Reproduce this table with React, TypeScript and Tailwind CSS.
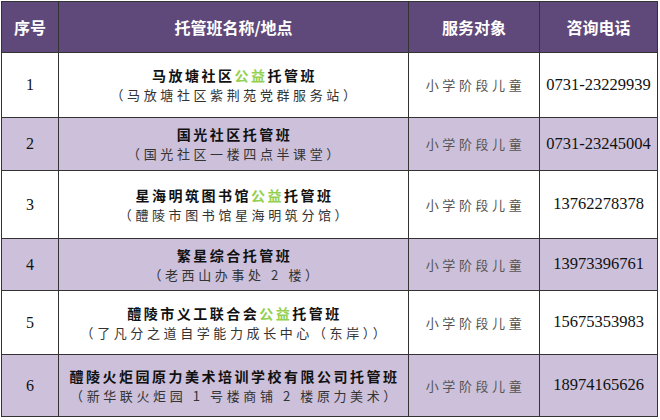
const rows = [
  {
    no: "1",
    pre: "马放塘社区",
    green: "公益",
    post: "托管班",
    sub: "（马放塘社区紫荆苑党群服务站）",
    phone: "0731-23229939",
    h: "h-[65px]",
    alt: false,
  },
  {
    no: "2",
    pre: "国光社区托管班",
    green: "",
    post: "",
    sub: "（国光社区一楼四点半课堂）",
    phone: "0731-23245004",
    h: "h-[53px]",
    alt: true,
  },
  {
    no: "3",
    pre: "星海明筑图书馆",
    green: "公益",
    post: "托管班",
    sub: "（醴陵市图书馆星海明筑分馆）",
    phone: "13762278378",
    h: "h-[68px]",
    alt: false,
  },
  {
    no: "4",
    pre: "繁星综合托管班",
    green: "",
    post: "",
    sub: "（老西山办事处 2 楼）",
    phone: "13973396761",
    h: "h-[52px]",
    alt: true,
  },
  {
    no: "5",
    pre: "醴陵市义工联合会",
    green: "公益",
    post: "托管班",
    sub: "（了凡分之道自学能力成长中心（东岸））",
    phone: "15675353983",
    h: "h-[64px]",
    alt: false,
  },
  {
    no: "6",
    pre: "醴陵火炬园原力美术培训学校有限公司托管班",
    green: "",
    post: "",
    sub: "（新华联火炬园 1 号楼商铺 2 楼原力美术）",
    phone: "18974165626",
    h: "h-[62px]",
    alt: true,
  },
];

const cjk = "font-['Noto_Sans_CJK_SC',sans-serif]";
const serif = "font-['Liberation_Serif','Noto_Sans_CJK_SC',serif]";

export default function App() {
  return (
    <div className="w-[660px] h-[420px] bg-white pt-px pl-px">
      <table className="border-collapse table-fixed w-[656px]">
        <colgroup>
          <col className="w-[57px]" />
          <col className="w-[350px]" />
          <col className="w-[131px]" />
          <col className="w-[118px]" />
        </colgroup>
        <thead>
          <tr className={`h-[51px] bg-[#5f497a] text-white text-[16px] font-bold ${cjk}`}>
            <th className="border border-[#333]">序号</th>
            <th className="border border-[#333]">托管班名称/地点</th>
            <th className="border border-[#333]">服务对象</th>
            <th className="border border-[#333]">咨询电话</th>
          </tr>
        </thead>
        <tbody>
          {rows.map((r) => (
            <tr key={r.no} className={`${r.h} ${r.alt ? "bg-[#ccc0da]" : "bg-white"}`}>
              <td className={`border border-[#333] text-center text-[16px] text-[#111] ${serif}`}>
                {r.no}
              </td>
              <td className={`border border-[#333] text-center ${cjk} leading-[20px]`}>
                <div className="text-[14px] font-bold text-[#111] tracking-[2.5px] pl-[2px]">
                  {r.pre}
                  {r.green && <span className="text-[#92d050]">{r.green}</span>}
                  {r.post}
                </div>
                <div className="text-[13px] text-[#333] tracking-[3.6px] pl-[3px]">{r.sub}</div>
              </td>
              <td className={`border border-[#333] text-center text-[13px] text-[#555] tracking-[3.6px] pl-[3px] ${cjk}`}>
                小学阶段儿童
              </td>
              <td className={`border border-[#333] text-center text-[16.5px] text-[#111] ${serif}`}>
                {r.phone}
              </td>
            </tr>
          ))}
        </tbody>
      </table>
    </div>
  );
}
